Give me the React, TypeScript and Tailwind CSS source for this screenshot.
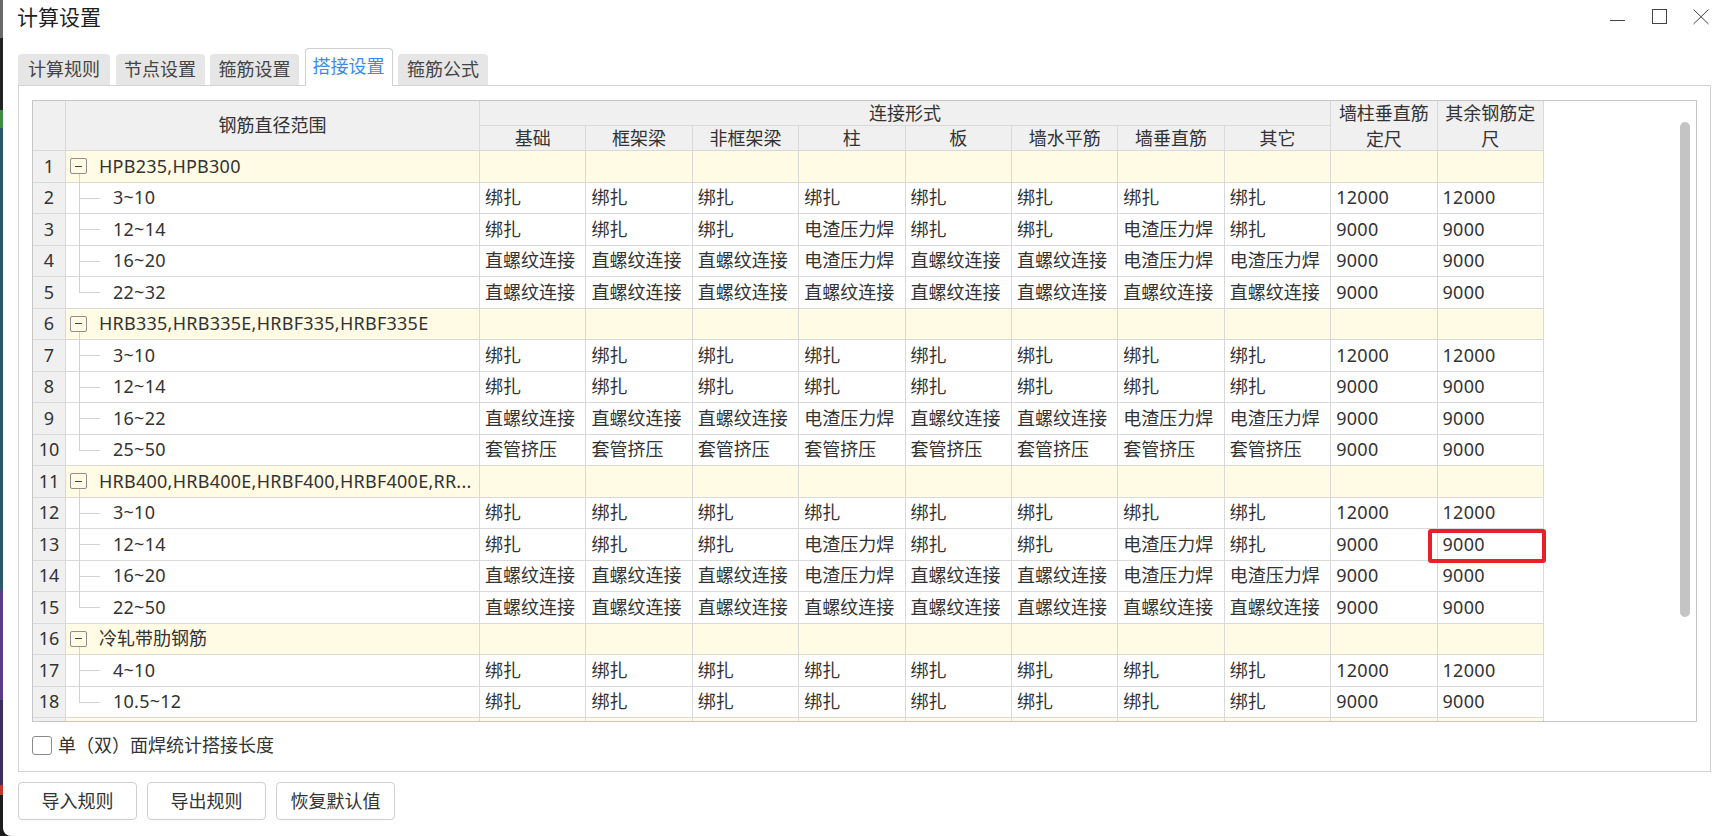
import React from 'react'

type Row =
  | { kind: 'group'; no: number; name: string }
  | { kind: 'item'; no: number; name: string; last?: boolean; values: string[] }

const B = '绑扎'
const Z = '直螺纹连接'
const D = '电渣压力焊'
const T = '套管挤压'

const rows: Row[] = [
  { kind: 'group', no: 1, name: 'HPB235,HPB300' },
  { kind: 'item', no: 2, name: '3~10', values: [B, B, B, B, B, B, B, B, '12000', '12000'] },
  { kind: 'item', no: 3, name: '12~14', values: [B, B, B, D, B, B, D, B, '9000', '9000'] },
  { kind: 'item', no: 4, name: '16~20', values: [Z, Z, Z, D, Z, Z, D, D, '9000', '9000'] },
  { kind: 'item', no: 5, name: '22~32', last: true, values: [Z, Z, Z, Z, Z, Z, Z, Z, '9000', '9000'] },
  { kind: 'group', no: 6, name: 'HRB335,HRB335E,HRBF335,HRBF335E' },
  { kind: 'item', no: 7, name: '3~10', values: [B, B, B, B, B, B, B, B, '12000', '12000'] },
  { kind: 'item', no: 8, name: '12~14', values: [B, B, B, B, B, B, B, B, '9000', '9000'] },
  { kind: 'item', no: 9, name: '16~22', values: [Z, Z, Z, D, Z, Z, D, D, '9000', '9000'] },
  { kind: 'item', no: 10, name: '25~50', last: true, values: [T, T, T, T, T, T, T, T, '9000', '9000'] },
  { kind: 'group', no: 11, name: 'HRB400,HRB400E,HRBF400,HRBF400E,RR...' },
  { kind: 'item', no: 12, name: '3~10', values: [B, B, B, B, B, B, B, B, '12000', '12000'] },
  { kind: 'item', no: 13, name: '12~14', values: [B, B, B, D, B, B, D, B, '9000', '9000'] },
  { kind: 'item', no: 14, name: '16~20', values: [Z, Z, Z, D, Z, Z, D, D, '9000', '9000'] },
  { kind: 'item', no: 15, name: '22~50', last: true, values: [Z, Z, Z, Z, Z, Z, Z, Z, '9000', '9000'] },
  { kind: 'group', no: 16, name: '冷轧带肋钢筋' },
  { kind: 'item', no: 17, name: '4~10', values: [B, B, B, B, B, B, B, B, '12000', '12000'] },
  { kind: 'item', no: 18, name: '10.5~12', last: true, values: [B, B, B, B, B, B, B, B, '9000', '9000'] },
]

const subHeads = ['基础', '框架梁', '非框架梁', '柱', '板', '墙水平筋', '墙垂直筋', '其它']
const tabs = [
  { label: '计算规则', w: 'w-[92px]' },
  { label: '节点设置', w: 'w-[89px]' },
  { label: '箍筋设置', w: 'w-[89px]' },
  { label: '搭接设置', w: 'w-[88px]', active: true },
  { label: '箍筋公式', w: 'w-[90px]' },
]

// latin text in the original font runs a touch wider than Noto Sans
const isLatin = (s: string) => /^[\x20-\x7e]+$/.test(s)

function GroupRow({ no, name }: { no?: number; name?: string }) {
  return (
    <div className="flex h-[31.5px] bg-[#fffbe5]">
      <div className="w-[33px] shrink-0 flex items-center justify-center bg-[#f0f0f0] border-r border-b border-[#d9d9d9]">
        {no}
      </div>
      <div className="relative w-[414px] shrink-0 flex items-center pl-[4px] border-r border-b border-[#d9d9d9]">
        {name && (
          <>
            <span className="w-[17px] h-[16px] shrink-0 flex items-center justify-center border border-[#8f8f8f] rounded-[2px]">
              <span className="w-[7px] h-px bg-[#444]" />
            </span>
            <span className="absolute left-[13px] top-[calc(50%+8px)] bottom-[-1px] w-px bg-[#d2d2d2]" />
            <span className={`ml-[12px] whitespace-nowrap overflow-hidden ${isLatin(name) ? 'tracking-[0.25px]' : ''}`}>
              {name}
            </span>
          </>
        )}
      </div>
      {Array.from({ length: 10 }).map((_, i) => (
        <div key={i} className="w-[106.4px] shrink-0 border-r border-b border-[#d9d9d9]" />
      ))}
    </div>
  )
}

function ItemRow({ no, name, last, values }: { no: number; name: string; last?: boolean; values: string[] }) {
  return (
    <div className="flex h-[31.5px] bg-white">
      <div className="w-[33px] shrink-0 flex items-center justify-center bg-[#f0f0f0] border-r border-b border-[#d9d9d9]">
        {no}
      </div>
      <div className="relative w-[414px] shrink-0 flex items-center pl-[47px] tracking-[0.25px] border-r border-b border-[#d9d9d9]">
        <span className={`absolute left-[13px] top-0 w-px bg-[#d2d2d2] ${last ? 'h-1/2' : 'bottom-[-1px]'}`} />
        <span className="absolute left-[13px] top-1/2 w-[21px] h-px bg-[#d2d2d2]" />
        {name}
      </div>
      {values.map((v, i) => (
        <div
          key={i}
          className={`relative w-[106.4px] shrink-0 flex items-center pl-[5px] whitespace-nowrap border-r border-b border-[#d9d9d9] ${
            isLatin(v) ? 'tracking-[0.3px]' : ''
          }`}
        >
          {v}
          {no === 13 && i === 9 && (
            <span className="absolute left-[-10px] right-[-3px] top-0 bottom-[-3px] z-10 border-4 border-[#e8202a] rounded-[3px]" />
          )}
        </div>
      ))}
    </div>
  )
}

export default function App() {
  return (
    <div className="flex w-[1721px] h-[836px] overflow-hidden bg-[#1c1c1c] font-['Noto_Sans','Noto_Sans_CJK_SC',sans-serif] text-[18px] text-[#333]">
      {/* desktop peeking out on the left */}
      <div className="flex flex-col w-[3px] shrink-0">
        <div className="h-[38px] bg-[#6a6a6a]" />
        <div className="h-[72px] bg-[#222]" />
        <div className="h-[18px] bg-[#3d8c40]" />
        <div className="h-[462px] bg-[#2b5766]" />
        <div className="h-[110px] bg-[#5b3b8e]" />
        <div className="h-[85px] bg-[#3a2f5c]" />
        <div className="h-[10px] bg-[#c0392b]" />
        <div className="flex-1 bg-[#1c1c1c]" />
      </div>

      <div className="flex-1 flex flex-col bg-white rounded-bl-[8px]">
        {/* title bar */}
        <div className="h-[48px] flex items-start justify-between pl-[14px] pr-[12px]">
          <span className="mt-[3px] leading-[28px] text-[21px] text-[#1f1f1f]">计算设置</span>
          <div className="flex gap-[25.5px] pt-[9px]">
            <svg width="16" height="16" viewBox="0 0 16 16">
              <line x1="0" y1="11.5" x2="15" y2="11.5" stroke="#444" strokeWidth="1" />
            </svg>
            <svg width="16" height="16" viewBox="0 0 16 16">
              <rect x="0.5" y="0.5" width="14" height="14" fill="none" stroke="#444" strokeWidth="1" />
            </svg>
            <svg width="16" height="16" viewBox="0 0 16 16">
              <line x1="0.5" y1="0.5" x2="15.5" y2="15" stroke="#444" strokeWidth="1" />
              <line x1="15.5" y1="0.5" x2="0.5" y2="15" stroke="#444" strokeWidth="1" />
            </svg>
          </div>
        </div>

        {/* tabs */}
        <div className="flex items-end gap-[5.5px] pl-[15px] h-[37px]">
          {tabs.map((t) =>
            t.active ? (
              <div
                key={t.label}
                className={`${t.w} h-[38px] -mb-px relative z-10 flex items-center justify-center pb-[3px] bg-white border border-b-0 border-[#d0d0d0] rounded-t-[4px] text-[#3d8be6]`}
              >
                {t.label}
              </div>
            ) : (
              <div
                key={t.label}
                className={`${t.w} h-[31px] flex items-center justify-center bg-[#e6e6e6] rounded-t-[4px] text-[#444]`}
              >
                {t.label}
              </div>
            )
          )}
        </div>

        {/* panel */}
        <div className="ml-[15px] mr-[10px] h-[687px] flex flex-col border border-[#d3d3d3] bg-white">
          <div className="mt-[14px] mx-[13px] h-[622px] flex border border-[#c6c6c6] overflow-hidden bg-white">
            <div className="w-[1511px] shrink-0">
              {/* header */}
              <div className="flex h-[50px] bg-[#f0f0f0]">
                <div className="w-[33px] shrink-0 border-r border-b border-[#d9d9d9]" />
                <div className="w-[414px] shrink-0 flex items-center justify-center border-r border-b border-[#d9d9d9]">
                  钢筋直径范围
                </div>
                <div className="w-[851.2px] shrink-0 flex flex-col">
                  <div className="h-[25px] flex items-center justify-center border-r border-b border-[#d9d9d9]">
                    连接形式
                  </div>
                  <div className="h-[25px] flex">
                    {subHeads.map((h) => (
                      <div
                        key={h}
                        className="w-[106.4px] shrink-0 flex items-center justify-center border-r border-b border-[#d9d9d9]"
                      >
                        {h}
                      </div>
                    ))}
                  </div>
                </div>
                <div className="w-[106.4px] shrink-0 flex items-center justify-center text-center leading-[26px] border-r border-b border-[#d9d9d9]">
                  墙柱垂直筋
                  <br />
                  定尺
                </div>
                <div className="w-[106.4px] shrink-0 flex items-center justify-center text-center leading-[26px] border-r border-b border-[#d9d9d9]">
                  其余钢筋定
                  <br />
                  尺
                </div>
              </div>

              {rows.map((r) =>
                r.kind === 'group' ? (
                  <GroupRow key={r.no} no={r.no} name={r.name} />
                ) : (
                  <ItemRow key={r.no} no={r.no} name={r.name} last={r.last} values={r.values} />
                )
              )}
              {/* next group, only its top edge scrolls into view */}
              <GroupRow />
            </div>
            <div className="flex-1" />
            <div className="w-[10px] mr-[6px] pt-[21px] shrink-0">
              <div className="h-[495px] rounded-full bg-[#c4c4c4]" />
            </div>
          </div>

          <label className="mt-[10px] ml-[13px] flex items-center gap-[6px]">
            <span className="w-[20px] h-[19px] border border-[#8a8a8a] rounded-[3px] bg-white" />
            <span>单（双）面焊统计搭接长度</span>
          </label>
        </div>

        {/* bottom buttons */}
        <div className="mt-[10px] ml-[15px] flex gap-[10px]">
          {['导入规则', '导出规则', '恢复默认值'].map((b) => (
            <button
              key={b}
              className="w-[119px] h-[38px] flex items-center justify-center bg-white border border-[#cfcfcf] rounded-[4px] text-[#333]"
            >
              {b}
            </button>
          ))}
        </div>
      </div>
    </div>
  )
}
